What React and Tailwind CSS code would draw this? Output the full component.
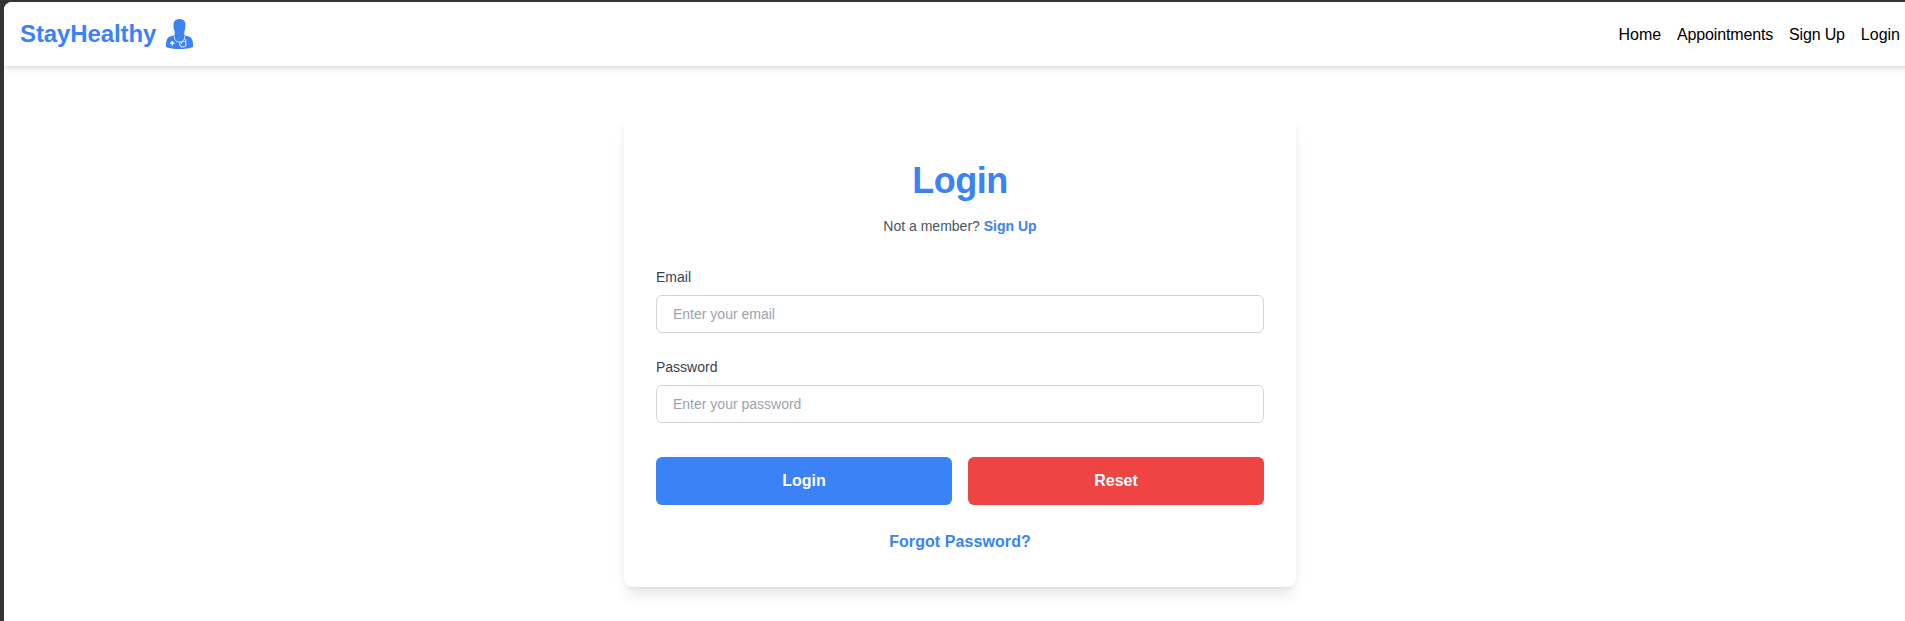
import React from "react";

const FONT = "font-['Liberation_Sans',Arial,sans-serif]";

function DoctorIcon() {
  return (
    <svg viewBox="0 0 27 30" className="h-[30px] w-[27px] shrink-0" aria-hidden="true">
      <path
        fill="#3b82f6"
        d="M0 28C-.2 24 .2 20.300 2.600 18.300 4.400 17.100 6.800 16.900 8.500 16.200H18.500c1.700.7 4.100.9 5.900 2.100C26.800 20.300 27.200 24 27 28 24 29.400 18.500 30 13.500 30S3 29.400 0 28Z"
      />
      <path
        d="M8.300 17.200c.1 3.800 1.800 5.800 5.200 5.800s5.100-2 5.200-5.800"
        stroke="#fff"
        strokeWidth="1"
        fill="none"
      />
      <path
        fill="#3b82f6"
        d="M13.500 0C9.900 0 7.500 2.100 7.500 5.400c0 3 .4 5.300 1.200 7v4.800c0 3.200 1.600 5.200 4.800 5.200s4.800-2 4.800-5.200v-4.800c.8-1.700 1.200-4 1.200-7C19.500 2.100 17.100 0 13.500 0Z"
      />
      <path d="M6.300 22v4.400M4.100 24.200h4.400" stroke="#fff" strokeWidth="1.500" fill="none" />
      <path
        d="M18.400 19.800c1.200.5 1.600 1.500 1.400 2.700M14 23.200c-.6 1.900-.3 3.900 1.200 4.600M17.300 28c1.800 0 2.700-1.300 2.700-3 0-1.600-1-2.700-2.300-2.700-1.400 0-2.200.9-2.200 2.300"
        stroke="#fff"
        strokeWidth="1"
        fill="none"
        strokeLinecap="round"
      />
      <circle cx="15.700" cy="27.700" r=".8" fill="#fff" />
    </svg>
  );
}

function Field({ id, label, type, placeholder }) {
  return (
    <div>
      <label htmlFor={id} className="mb-2 block text-sm text-gray-700">
        {label}
      </label>
      <input
        id={id}
        type={type}
        placeholder={placeholder}
        className="block w-full rounded-md border border-[#d1d5db] px-4 py-2 text-sm placeholder:text-[#9ca3af]"
      />
    </div>
  );
}

export default function App() {
  return (
    <div className={`h-[621px] overflow-hidden bg-[#353333] pt-0.5 pl-1 ${FONT}`}>
      <div className="h-[619px] w-[1912px] overflow-hidden rounded-tl-lg bg-white">
        <nav className="flex h-16 items-center justify-between bg-white px-4 shadow-md">
          <a href="#" className="flex items-center gap-2.5 text-2xl font-bold tracking-[-0.1px] text-[#3b82f6]">
            StayHealthy
            <DoctorIcon />
          </a>
          <div className="flex gap-4 pt-px text-base text-black">
            <a href="#">Home</a>
            <a href="#" className="tracking-[-0.16px]">Appointments</a>
            <a href="#" className="tracking-[-0.16px]">Sign Up</a>
            <a href="#">Login</a>
          </div>
        </nav>
        <main className="flex justify-center pt-[47px]">
          <div className="h-[474px] w-full max-w-2xl rounded-lg bg-white px-8 pt-12 shadow-lg">
            <h1 className="text-center text-4xl font-bold tracking-[-0.5px] text-[#3b82f6]">Login</h1>
            <p className="mt-[15px] text-center text-sm text-gray-600">
              Not a member?{" "}
              <a href="#" className="font-bold text-[#3b82f6]">
                Sign Up
              </a>
            </p>
            <form className="mt-[31px] space-y-6">
              <Field id="email" label="Email" type="email" placeholder="Enter your email" />
              <Field id="password" label="Password" type="password" placeholder="Enter your password" />
              <div className="grid grid-cols-2 gap-4 pt-2.5 font-bold text-white">
                <button type="button" className="h-12 rounded-md bg-[#3b82f6]">
                  Login
                </button>
                <button type="button" className="h-12 rounded-md bg-[#ef4444]">
                  Reset
                </button>
              </div>
            </form>
            <div className="mt-[25px] text-center font-bold tracking-[0.08px] text-[#3b82f6]">
              <a href="#">Forgot Password?</a>
            </div>
          </div>
        </main>
      </div>
    </div>
  );
}
